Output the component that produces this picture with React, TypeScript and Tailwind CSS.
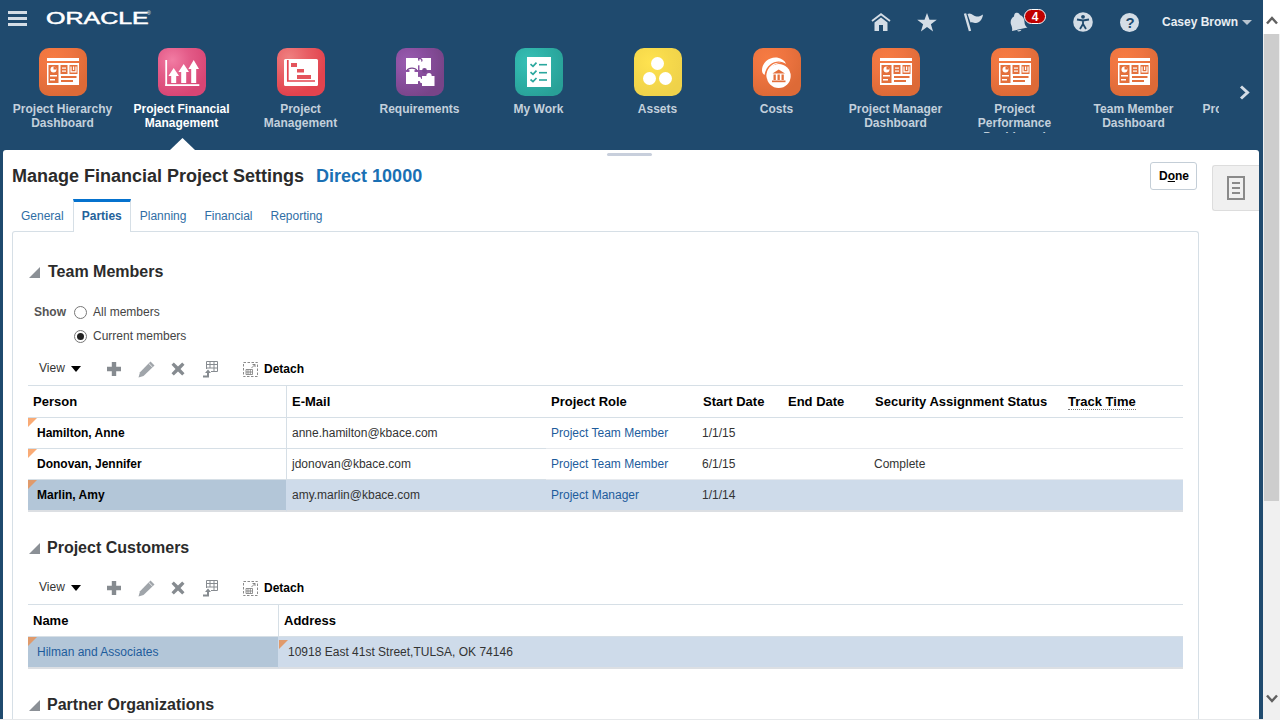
import React from "react";

const Dash = () => (
  <svg width="48" height="48" viewBox="0 0 48 48">
    <rect x="8" y="10" width="32" height="3" fill="#fff" />
    <rect x="8" y="15" width="32" height="22" fill="#fff" />
    <rect x="9.5" y="17" width="10" height="18" fill="#e4703c" />
    <rect x="21.5" y="17" width="7" height="9" fill="#e4703c" />
    <rect x="30.5" y="17" width="8" height="9" fill="#e4703c" />
    <rect x="22" y="28" width="15.5" height="2" fill="#e4703c" />
    <rect x="22" y="32" width="12" height="2" fill="#e4703c" />
    <circle cx="14.5" cy="21.5" r="3" fill="#fff" />
    <path d="M14.5 21.5V18.5A3 3 0 0 1 17.5 21.5Z" fill="#e4703c" />
    <rect x="11" y="27" width="7" height="1.5" fill="#fff" />
    <rect x="11" y="31" width="5" height="1.5" fill="#fff" />
    <rect x="23" y="19.5" width="4" height="1.2" fill="#fff" />
    <rect x="23" y="22.5" width="4" height="1.2" fill="#fff" />
    <path d="M32 18.5V23.8H37V18.5" fill="none" stroke="#fff" strokeWidth="1.2" />
    <rect x="34" y="18.5" width="1.2" height="3.5" fill="#fff" />
  </svg>
);

const Fin = () => (
  <svg width="48" height="48" viewBox="0 0 48 48" fill="#fff">
    <rect x="7.3" y="12" width="1.8" height="26" />
    <rect x="7.3" y="36.2" width="34" height="1.8" />
    <path d="M15.7 20L21 28H18.2V35H13.2V28H10.4Z" />
    <path d="M25.7 16L31 24H28.2V35H23.2V24H20.4Z" />
    <path d="M35.7 12L41 21H38.2V35H33.2V21H30.4Z" />
  </svg>
);

const Gantt = () => (
  <svg width="48" height="48" viewBox="0 0 48 48">
    <rect x="7" y="11" width="34" height="27" rx="1.5" fill="#fff" />
    <path d="M10.8 12V33H38" fill="none" stroke="#e4444f" strokeWidth="1.7" />
    <rect x="14" y="15" width="6" height="4" fill="#e4545c" />
    <rect x="20" y="21" width="7" height="3.5" fill="#e4545c" />
    <rect x="20" y="27" width="14" height="4" fill="#e4545c" />
  </svg>
);

const Puzzle = () => (
  <svg width="48" height="48" viewBox="0 0 48 48">
    <rect x="10" y="10" width="12" height="12" fill="#fff" />
    <rect x="23.5" y="10" width="11.5" height="12" fill="#fff" />
    <circle cx="23" cy="15" r="2.4" fill="#fff" />
    <path d="M22 10.500C24.500 10 27 11.500 25.500 13.500" fill="none" stroke="#7b4790" strokeWidth="1.200" />
    <rect x="10" y="24" width="12" height="12" fill="#fff" />
    <circle cx="16" cy="23" r="2.600" fill="#fff" />
    <circle cx="23" cy="31" r="2.200" fill="#fff" />
    <rect x="26" y="28" width="12.500" height="10" fill="#fff" />
    <circle cx="33" cy="27.500" r="2.600" fill="#fff" />
    <circle cx="26" cy="33" r="2.200" fill="#fff" />
    <path d="M11 22.500C12.500 19.500 19 19 21 22.500" fill="none" stroke="#7b4790" strokeWidth="1.200" />
    <circle cx="28.500" cy="22.500" r="2.400" fill="#7b4790" />
  </svg>
);

const Check = () => (
  <svg width="48" height="48" viewBox="0 0 48 48">
    <rect x="12" y="9" width="24" height="30" fill="#fff" />
    {[16.7, 24.7, 32].map((y) => (
      <g key={y}>
        <rect x="24" y={y - 0.8} width="8" height="1.6" fill="#2aa79e" />
        <path d={`M15.5 ${y - 0.5}L18 ${y + 1.6}L21.5 ${y - 2}`} fill="none" stroke="#2aa79e" strokeWidth="1.7" />
      </g>
    ))}
  </svg>
);

const Assets = () => (
  <svg width="48" height="48" viewBox="0 0 48 48" fill="#fff">
    <circle cx="23.5" cy="15.5" r="6.5" />
    <circle cx="15.5" cy="30.5" r="6.5" />
    <circle cx="31.5" cy="30.5" r="6.5" />
  </svg>
);

const Costs = () => (
  <svg width="48" height="48" viewBox="0 0 48 48">
    <path d="M9 22.5C9 14 17 8.5 24 9.5C29 10.5 32 13 33 16C27 11 14 13 11.500 27C9.800 26 9 24 9 22.500Z" fill="#fff" />
    <path d="M14 31C11.500 22 19 13.500 28 15C22 14.500 14.500 20 14 31Z" fill="#fff" />
    <circle cx="25.700" cy="28" r="12" fill="#fff" />
    <path d="M25.700 21.500L32 25.500H19.500Z" fill="#e4703c" />
    <rect x="20.500" y="26.500" width="2.300" height="5.500" fill="#e4703c" />
    <rect x="24.500" y="26.500" width="2.300" height="5.500" fill="#e4703c" />
    <rect x="28.500" y="26.500" width="2.300" height="5.500" fill="#e4703c" />
    <rect x="19" y="32.500" width="13.500" height="1.700" fill="#e4703c" />
  </svg>
);

const tiles: Record<string, string> = {
  orange: "bg-[radial-gradient(circle_at_30%_20%,#f67b42_0%,#ee7440_35%,#dd6a37_75%)]",
  pink: "bg-[radial-gradient(circle_at_30%_25%,#f27ca3_0%,#e35b88_35%,#d84574_75%)]",
  red: "bg-[radial-gradient(circle_at_25%_20%,#ef8080_0%,#e85e64_35%,#e2434e_70%)]",
  purple: "bg-[radial-gradient(circle_at_25%_30%,#9a5cb0_0%,#8a4f9f_35%,#784488_75%)]",
  teal: "bg-[radial-gradient(circle_at_30%_30%,#37c0b6_0%,#2eb0a6_40%,#28a097_80%)]",
  yellow: "bg-[radial-gradient(circle_at_35%_30%,#ffe350_0%,#f6d94b_40%,#efd24a_75%)]",
};

const navItems = [
  { label: "Project Hierarchy Dashboard", tile: tiles.orange, icon: <Dash /> },
  { label: "Project Financial Management", tile: tiles.pink, icon: <Fin />, active: true },
  { label: "Project Management", tile: tiles.red, icon: <Gantt /> },
  { label: "Requirements", tile: tiles.purple, icon: <Puzzle /> },
  { label: "My Work", tile: tiles.teal, icon: <Check /> },
  { label: "Assets", tile: tiles.yellow, icon: <Assets /> },
  { label: "Costs", tile: tiles.orange, icon: <Costs /> },
  { label: "Project Manager Dashboard", tile: tiles.orange, icon: <Dash /> },
  { label: "Project Performance Dashboard", tile: tiles.orange, icon: <Dash /> },
  { label: "Team Member Dashboard", tile: tiles.orange, icon: <Dash /> },
  { label: "Project Executive Dashboard", tile: tiles.orange, icon: <Dash /> },
];

const TopBar = () => (
  <div className="h-[44px] flex items-start relative">
    <div className="ml-[8px] mt-[11px] w-[19px] flex flex-col gap-[3px]">
      <div className="h-[3px] bg-[#d4dde6]" />
      <div className="h-[3px] bg-[#d4dde6]" />
      <div className="h-[3px] bg-[#d4dde6]" />
    </div>
    <div className="ml-[19px] mt-[9px] w-[103px] h-[20px] relative">
      <span className="block origin-left scale-x-[1.47] text-[17px] leading-[20px] text-white [-webkit-text-stroke:0.5px_white]">ORACLE</span>
      <span className="absolute left-[101px] top-[1px] text-[5px] leading-[6px] text-white">®</span>
    </div>
    <div className="ml-auto mr-[11px] flex items-center h-[44px] text-[#d4dde6]">
      <div className="w-[46px] flex justify-center">
        <svg width="20" height="18" viewBox="0 0 20 18" fill="#d4dde6">
          <path d="M1 8L10 1.200L19 8" fill="none" stroke="#d4dde6" strokeWidth="1.800" />
          <path d="M3.500 9.500L10 4.500L16.500 9.500V18H12V12H8V18H3.500Z" />
        </svg>
      </div>
      <div className="w-[46px] flex justify-center">
        <svg width="20" height="19" viewBox="0 0 20 19" fill="#d4dde6">
          <path d="M10 0L12.500 6.800H19.800L13.900 11.200L16.100 18.500L10 14.100L3.900 18.500L6.100 11.200L0.200 6.800H7.500Z" />
        </svg>
      </div>
      <div className="w-[46px] flex justify-center">
        <svg width="20" height="20" viewBox="0 0 20 20" fill="#d4dde6">
          <path d="M2 1.500L7 19" fill="none" stroke="#d4dde6" strokeWidth="2.400" />
          <path d="M4.500 2C8 0 10.500 4 13.500 4.500C15.500 4.800 18 4 20 2.500C19.500 7 16.500 11 13 11C11 11 9.500 9.500 7.500 10.500Z" />
        </svg>
      </div>
      <div className="w-[46px] flex justify-center relative">
        <svg width="20" height="20" viewBox="0 0 20 20" fill="#d4dde6">
          <path d="M6.500 1C9 0 10.500 1.500 11 3C14 4 15.500 7 15.500 10C15.500 13 17 14.500 18.500 15.500L3 19C3.500 17 3 15 2 12.500C1 9.500 2 6 5 4.500C5 3 5.500 1.500 6.500 1Z" />
          <path d="M8 18.500C9 20 11.500 19.800 12.500 17.800Z" />
        </svg>
        <div className="absolute left-[28px] top-[-3px] w-[22px] h-[15px] rounded-full bg-[#c00000] border border-white flex items-center justify-center text-[12px] leading-[12px] font-bold text-white">4</div>
      </div>
      <div className="w-[46px] ml-[18px] flex justify-center">
        <svg width="20" height="20" viewBox="0 0 20 20">
          <circle cx="10" cy="10" r="9.800" fill="#d4dde6" />
          <circle cx="10" cy="4.800" r="1.900" fill="#1f4a6e" />
          <path d="M4 7.500L10 8.500L16 7.500M10 8.500V12M10 12L7 17M10 12L13 17" fill="none" stroke="#1f4a6e" strokeWidth="1.800" />
        </svg>
      </div>
      <div className="w-[46px] ml-[1px] flex justify-center">
        <div className="w-[19px] h-[19px] rounded-full bg-[#d4dde6] flex items-center justify-center text-[15px] leading-[19px] font-bold text-[#1f4a6e]">?</div>
      </div>
      <span className="ml-[9px] text-[12px] font-bold text-[#e8eef3]">Casey Brown</span>
      <div className="ml-[4px] mt-[1px] w-0 h-0 border-x-[5px] border-x-transparent border-t-[5px] border-t-[#b8c4cf]" />
    </div>
  </div>
);

const Nav = () => (
  <div className="flex items-start">
    <div className="w-[1219px] h-[89px] overflow-hidden flex pl-[3px] pt-[4px]">
      {navItems.map((n) => (
        <div key={n.label} className="w-[119px] shrink-0 flex flex-col">
          <div className={`ml-[36px] w-[48px] h-[48px] rounded-[10px] ${n.tile}`}>{n.icon}</div>
          <div className={`mt-[6px] px-[6px] text-center text-[12px] leading-[14px] font-bold ${n.active ? "text-white" : "text-[#c3d0dc]"}`}>{n.label}</div>
        </div>
      ))}
    </div>
    <svg className="ml-[20px] mt-[41px]" width="11" height="15" viewBox="0 0 11 15">
      <path d="M2 1.500L8.500 7.500L2 13.500" fill="none" stroke="#d4dde6" strokeWidth="3" />
    </svg>
  </div>
);

const Heading = ({ title, textClass }: { title: string; textClass: string }) => (
  <div className="h-[24px] flex items-center">
    <svg className="ml-[1px]" width="11" height="11" viewBox="0 0 11 11">
      <path d="M11 0V11H0Z" fill="#8b9096" />
    </svg>
    <h2 className={`${textClass} text-[16px] leading-[24px] font-bold text-[#2b2b2b]`}>{title}</h2>
  </div>
);

const Toolbar = () => (
  <div className="h-[34px] flex items-center pt-[2px] pl-[11px] text-[12px]">
    <span className="w-[27px] text-[#333] -mt-[2px]">View</span>
    <div className="ml-[5px] w-0 h-0 border-x-[5px] border-x-transparent border-t-[6px] border-t-black" />
    <svg className="ml-[25px]" width="16" height="16" viewBox="0 0 16 16">
      <path d="M5.800 1H10.200V5.800H15V10.200H10.200V15H5.800V10.200H1V5.800H5.800Z" fill="#868b90" />
    </svg>
    <svg className="ml-[16px]" width="17" height="17" viewBox="0 0 17 17">
      <path d="M12.500 0.500L16.500 4.500L5.500 15L0.500 16.500L2 11.300Z" fill="#a0a5aa" />
      <path d="M10.800 2.500L14.500 6.200" stroke="#fff" strokeWidth="0.800" />
    </svg>
    <svg className="ml-[15px]" width="16" height="16" viewBox="0 0 16 16">
      <path d="M1.500 3.800L3.800 1.500L8 5.500L12.200 1.500L14.500 3.800L10.500 8L14.500 12.200L12.200 14.500L8 10.500L3.800 14.500L1.500 12.200L5.500 8Z" fill="#868b90" />
    </svg>
    <svg className="ml-[16px]" width="16" height="17" viewBox="0 0 16 17">
      <path d="M4.500 0.500H15.500V10.500H9M4.500 0.500V8M4.500 3.500H15.500M4.500 7H15.500M8 0.500V7M12 0.500V10.500" fill="none" stroke="#868b90" strokeWidth="1" />
      <path d="M1 15.500H6V11" fill="none" stroke="#868b90" strokeWidth="2" />
      <path d="M3 12L6 8.500L9 12Z" fill="#868b90" />
    </svg>
    <svg className="ml-[25px]" width="15" height="15" viewBox="0 0 15 15">
      <rect x="0.500" y="0.500" width="14" height="14" fill="none" stroke="#8a8a8a" strokeDasharray="2.500 1.500" />
      <path d="M3 7.500H9.500V12.500H3ZM3 10H9.500M5 7.500V12.500M7.300 7.500V12.500" fill="none" stroke="#7a7a7a" strokeWidth="0.800" />
      <path d="M8.500 6L12 2.500M9.500 2.500H12V5" fill="none" stroke="#7a7a7a" strokeWidth="0.900" />
    </svg>
    <span className="ml-[6px] font-bold text-black">Detach</span>
  </div>
);

const Flag = ({ dark, top }: { dark?: boolean; top?: boolean }) => (
  <div className={`absolute left-0 w-[9px] h-[9px] [clip-path:polygon(0_0,100%_0,0_100%)] ${top ? "top-[3px]" : "top-0"} ${dark ? "bg-[#e09a6b]" : "bg-[#f9ab76]"}`} />
);

const members = [
  { name: "Hamilton, Anne", mail: "anne.hamilton@kbace.com", role: "Project Team Member", start: "1/1/15", status: "", sel: false },
  { name: "Donovan, Jennifer", mail: "jdonovan@kbace.com", role: "Project Team Member", start: "6/1/15", status: "Complete", sel: false },
  { name: "Marlin, Amy", mail: "amy.marlin@kbace.com", role: "Project Manager", start: "1/1/14", status: "", sel: true },
];

const headCell = "h-[32px] flex items-center text-[13px] font-bold text-black border-b border-[#d6dfe6]";

const MemberTable = () => (
  <div className="border-t border-[#d6dfe6] grid grid-cols-[259px_259px_152px_87px_87px_193px_87px_31px] text-[12px] text-[#333]">
    <div className={`${headCell} pl-[5px] border-r`}>Person</div>
    <div className={`${headCell} pl-[5px]`}>E-Mail</div>
    <div className={`${headCell} pl-[5px]`}>Project Role</div>
    <div className={`${headCell} pl-[5px]`}>Start Date</div>
    <div className={`${headCell} pl-[3px]`}>End Date</div>
    <div className={`${headCell} pl-[3px]`}>Security Assignment Status</div>
    <div className={`${headCell} pl-[3px]`}>
      <span className="border-b border-dotted border-[#777] leading-[14px] -mb-[1px]">Track Time</span>
    </div>
    <div className={headCell} />
    {members.map((m) => {
      const last = m.sel ? "h-[32px] border-b-2 border-[#dcdfe3] bg-[#cedbea]" : "h-[31px] border-b border-[#e7eaee]";
      return (
        <React.Fragment key={m.name}>
          <div className={`relative flex items-center pl-[9px] font-bold text-black border-r ${m.sel ? "h-[32px] border-b-2 border-b-[#dcdfe3] border-r-[#cedbea] bg-[#b3c6d8]" : "h-[31px] border-b border-[#d6dfe6]"}`}>
            <Flag dark={m.sel} />
            {m.name}
          </div>
          <div className={`flex items-center pl-[5px] ${m.sel ? "h-[32px] border-b-2 border-[#dcdfe3] bg-[#cedbea]" : "h-[31px] border-b border-[#d6dfe6]"}`}>{m.mail}</div>
          <div className={`flex items-center pl-[5px] text-[#1d5c9c] ${last}`}>{m.role}</div>
          <div className={`flex items-center pl-[4px] ${last}`}>{m.start}</div>
          <div className={last} />
          <div className={`flex items-center pl-[2px] ${last}`}>{m.status}</div>
          <div className={last} />
          <div className={last} />
        </React.Fragment>
      );
    })}
  </div>
);

const CustomerTable = () => (
  <div className="border-t border-[#d6dfe6] grid grid-cols-[251px_904px] text-[12px]">
    <div className={`${headCell} pl-[5px] border-r`}>Name</div>
    <div className={`${headCell} pl-[5px]`}>Address</div>
    <div className="relative h-[32px] flex items-center pl-[9px] bg-[#b3c6d8] text-[#1d5c9c] border-b-2 border-b-[#dcdfe3] border-r border-r-[#cedbea]">
      <Flag dark />
      Hilman and Associates
    </div>
    <div className="relative h-[32px] flex items-center pl-[9px] bg-[#cedbea] text-[#333] border-b-2 border-[#dcdfe3]">
      <Flag dark top />
      10918 East 41st Street,TULSA, OK 74146
    </div>
  </div>
);

const Radio = ({ label, on }: { label: string; on?: boolean }) => (
  <div className="flex items-center gap-[6px] h-[24px]">
    <div className="w-[13px] h-[13px] rounded-full border border-[#777] bg-white flex items-center justify-center">
      {on && <div className="w-[7px] h-[7px] rounded-full bg-[#222]" />}
    </div>
    <span className="text-[12px] text-[#444]">{label}</span>
  </div>
);

export default function App() {
  return (
    <div className="w-[1280px] h-[720px] overflow-hidden flex bg-[#1f4a6e] font-['Liberation_Sans',Arial,sans-serif]">
      <div className="w-[1263px] h-[720px] flex flex-col">
        <header className="h-[150px] shrink-0 relative">
          <TopBar />
          <Nav />
          <div className="absolute left-[170px] bottom-0 w-[25px] h-[12px] bg-white [clip-path:polygon(50%_0,100%_100%,0_100%)]" />
        </header>
        <main className="ml-[3px] w-[1256px] h-[569px] bg-white rounded-t-[3px] flex relative overflow-hidden">
          <div className="absolute left-[604px] top-[3px] w-[45px] h-[3px] rounded-full bg-[#c8cfdc]" />
          <div className="ml-[9px] w-[1187px] pt-[12px] flex flex-col">
            <div className="h-[37px] shrink-0 flex items-start justify-between">
              <div className="flex items-center h-[28px]">
                <h1 className="text-[18px] leading-[28px] font-bold text-[#2b2b2b]">Manage Financial Project Settings</h1>
                <span className="ml-[12px] text-[18px] leading-[28px] font-bold text-[#1a70b4]">Direct 10000</span>
              </div>
              <button className="mr-[2px] w-[47px] h-[28px] pl-[1px] rounded-[3px] border border-[#c4ced7] bg-white text-[12px] font-bold text-black">
                D<span className="underline">o</span>ne
              </button>
            </div>
            <div className="h-[32px] shrink-0 flex text-[12px] text-[#2f6ea5]">
              <div className="px-[9px] pt-[2px] h-[32px] flex items-center">General</div>
              <div className="relative z-10 px-[8px] pb-[3px] h-[33px] flex items-center border-x border-[#d6dfe6] border-t-[3px] border-t-[#0572ce] bg-white font-bold text-[#24629b]">Parties</div>
              <div className="px-[9px] pt-[2px] h-[32px] flex items-center">Planning</div>
              <div className="px-[9px] pt-[2px] h-[32px] flex items-center">Financial</div>
              <div className="px-[9px] pt-[2px] h-[32px] flex items-center">Reporting</div>
            </div>
            <div className="flex-1 border border-b-0 border-[#d6dfe6] rounded-t-[3px] pt-[28px] px-[15px]">
              <Heading title="Team Members" textClass="ml-[8px]" />
              <div className="mt-[16px] pl-[6px] flex">
                <span className="w-[40px] h-[24px] text-[12px] leading-[24px] font-bold text-[#555]">Show</span>
                <div className="flex flex-col">
                  <Radio label="All members" />
                  <Radio label="Current members" on />
                </div>
              </div>
              <div className="mt-[3px]"><Toolbar /></div>
              <MemberTable />
              <div className="mt-[24px]"><Heading title="Project Customers" textClass="ml-[7px]" /></div>
              <div className="mt-[10px]"><Toolbar /></div>
              <CustomerTable />
              <div className="mt-[24px]"><Heading title="Partner Organizations" textClass="ml-[7px]" /></div>
            </div>
          </div>
          <div className="ml-[13px] mt-[15px] w-[47px] h-[46px] bg-[#f0f0f0] border border-r-0 border-[#dddddd] rounded-l-[3px] flex items-center justify-center">
            <svg width="18" height="24" viewBox="0 0 18 24">
              <path d="M1 1H17V23H1Z" fill="none" stroke="#8a8a8a" strokeWidth="2" />
              <path d="M5 7H13M5 12H13M5 17H13" stroke="#8a8a8a" strokeWidth="2" />
            </svg>
          </div>
        </main>
        <div className="h-[1px] bg-[#e6e8ea]" />
      </div>
      <div className="w-[17px] h-[720px] bg-[#f0f0f0] flex flex-col">
        <div className="h-[34px] bg-white flex justify-center pt-[16px]">
          <svg width="12" height="9" viewBox="0 0 12 9">
            <path d="M1 7.500L6 2L11 7.500" fill="none" stroke="#606060" strokeWidth="2.500" />
          </svg>
        </div>
        <div className="ml-[1px] w-[15px] h-[467px] bg-[#cdcdcd]" />
        <div className="flex-1 flex justify-center items-end pb-[17px]">
          <svg width="12" height="9" viewBox="0 0 12 9">
            <path d="M1 1.500L6 7L11 1.500" fill="none" stroke="#606060" strokeWidth="2.500" />
          </svg>
        </div>
      </div>
    </div>
  );
}
